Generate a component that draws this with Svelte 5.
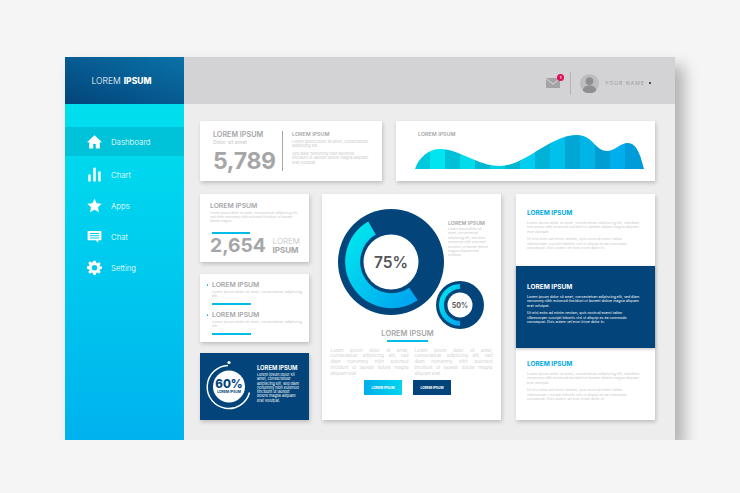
<script>
  const nav = [
    { label: 'Dashboard', icon: 'home', active: true },
    { label: 'Chart', icon: 'chart' },
    { label: 'Apps', icon: 'star' },
    { label: 'Chat', icon: 'chat' },
    { label: 'Setting', icon: 'gear' }
  ]
  const stripes = ['#00c9dd', '#00e6f0', '#00c0d8', '#00dcea', '#00b8d2', '#00cfe6', '#00b6d0', '#00cdef', '#00b2d6', '#00c0ec', '#00a6d4', '#00b4e6', '#009dd2', '#00aeee', '#009cda', '#0098d6']
  const short = 'Lorem ipsum dolor sit amet, consectetuer adipiscing elit, sed diam nonummy nibh euismod tincidunt ut laoreet dolore magna aliquam erat volutpat.'
  const long = 'Ut wisi enim ad minim veniam, quis nostrud exerci tation ullamcorper suscipit lobortis nisl ut aliquip ex ea commodo consequat. Duis autem vel eum iriure dolor in.'
  const column = 'Lorem ipsum dolor sit amet, consectetuer adipiscing elit, sed diam nonummy nibh euismod tincidunt ut laoreet dolore magna aliquam erat'
</script>

<div class="shell">
  <aside class="sidebar">
    <div class="brand">LOREM <b>IPSUM</b></div>
    <nav>
      {#each nav as item}
        <div class="item" class:active={item.active}>
          <svg viewBox="0 0 24 24" class="icon">
            {#if item.icon === 'home'}
              <path d="M12 2 0 13h3.500v10H10v-7h4v7h6.500V13H24z" />
            {:else if item.icon === 'chart'}
              <path d="M2 12h4v11H2zM10 1h4v22h-4zM18 7h4v16h-4z" />
            {:else if item.icon === 'star'}
              <path d="m12 1 3.400 7.400 8.100.9-6 5.500 1.700 8L12 18.700 4.800 22.800l1.700-8-6-5.500 8.100-.9z" />
            {:else if item.icon === 'chat'}
              <path fill-rule="evenodd" d="M1 3h22v15h-5v4l-4-4H1zM4.500 6.500v1.500h15V6.500zM4.500 10v1.500h15V10zM4.500 13.500V15h15v-1.500z" />
            {:else}
              <path fill-rule="evenodd" d="M10 1h4l.6 3.200 1.900.8 2.700-1.900 2.800 2.800-1.900 2.700.8 1.900L24 10v4l-3.100.6-.8 1.900 1.900 2.700-2.800 2.800-2.700-1.900-1.900.8L14 24h-4l-.6-3.100-1.900-.8-2.700 1.900-2.800-2.800 1.900-2.700-.8-1.900L0 14v-4l3.100-.5.8-1.900L2 4.900l2.800-2.800 2.700 1.900 1.900-.8zM12 8a4.300 4.300 0 1 0 0 8.600A4.300 4.300 0 0 0 12 8z" />
            {/if}
          </svg>
          <span>{item.label}</span>
        </div>
      {/each}
    </nav>
  </aside>

  <div class="main">
    <header>
      <div class="mail">
        <svg viewBox="0 0 14 10" width="14" height="10">
          <path d="M0 0h14L7 5.500z" fill="#a3a3a5" />
          <path d="M0 1.200 7 6.800l7-5.600V10H0z" fill="#a3a3a5" />
        </svg>
        <i class="badge">1</i>
      </div>
      <div class="sep"></div>
      <div class="avatar">
        <svg viewBox="0 0 20 20" width="19" height="19">
          <circle cx="10" cy="10" r="10" fill="#bdbdbf" />
          <circle cx="10" cy="7.500" r="4" fill="#8f8f91" />
          <path d="M3 17.500c0-4 3-5.500 7-5.500s7 1.500 7 5.500a10 10 0 0 1-14 0z" fill="#8f8f91" />
        </svg>
      </div>
      <span class="name">YOUR NAME</span>
      <i class="dot"></i>
    </header>

    <div class="content">
      <div class="row top">
        <section class="card stat">
          <div class="stat-left">
            <h3>LOREM IPSUM</h3>
            <p class="sub">Dolor sit amet</p>
            <div class="big">5,789</div>
          </div>
          <div class="stat-right">
            <h4>LOREM IPSUM</h4>
            <p>Lorem ipsum dolor sit amet, consectetuer adipiscing elit.</p>
            <p>Sed diam nonummy nibh euismod tincidunt ut laoreet dolore magna aliquam erat volutpat.</p>
          </div>
        </section>
        <section class="card wave">
          <h4>LOREM IPSUM</h4>
          <svg viewBox="0 0 229 34" width="229" height="34">
            <defs>
              <clipPath id="hills">
                <path d="M0 34C4 22 14 14 25 14 45 14 62 31 85 31 110 31 135 0 162 0 178 0 180 16 192 16 200 16 205 8 213 8 222 8 226 22 229 34Z" />
              </clipPath>
            </defs>
            <g clip-path="url(#hills)">
              {#each stripes as colour, i}
                <rect x={i * 15} y="0" width="15.500" height="34" fill={colour} />
              {/each}
            </g>
          </svg>
        </section>
      </div>

      <div class="row bottom">
        <div class="left">
          <section class="card count">
            <h3>LOREM IPSUM</h3>
            <p>Lorem ipsum dolor sit amet, consectetuer adipiscing elit, sed diam nonummy nibh euismod tincidunt ut laoreet dolore magna</p>
            <div class="rule"></div>
            <div class="count-row">
              <div class="big">2,654</div>
              <div class="word">LOREM<b>IPSUM</b></div>
            </div>
          </section>

          <section class="card list">
            {#each [0, 1] as n}
              <div class="list-item">
                <h3>LOREM IPSUM</h3>
                <p>Lorem ipsum dolor sit amet, consectetuer adipiscing elit.</p>
                <div class="rule"></div>
              </div>
            {/each}
          </section>

          <section class="card dark-card">
            <svg viewBox="0 0 50 52" width="50" height="52" class="ring">
              <circle cx="24" cy="3.500" r="1.600" fill="#fff" />
              <path d="M23 6.500a21.500 21.500 0 1 0 21.500 27" fill="none" stroke="#fff" stroke-width="1.500" />
              <circle cx="24" cy="27.500" r="16" fill="#fff" />
              <text x="24" y="29" text-anchor="middle" class="pct">60%</text>
              <text x="24" y="33.500" text-anchor="middle" class="pct-sub">LOREM IPSUM</text>
            </svg>
            <div class="dark-text">
              <h4>LOREM IPSUM</h4>
              <p>Lorem ipsum dolor sit amet, consectetuer adipiscing elit, sed diam nonummy nibh euismod tincidunt ut laoreet dolore magna aliquam erat volutpat.</p>
            </div>
          </section>
        </div>

        <section class="card center">
          <div class="donuts">
            <svg viewBox="0 0 106 106" width="106" height="106">
              <defs>
                <linearGradient id="arc" x1="0" y1="0" x2="1" y2="1">
                  <stop offset="0" stop-color="#00e6ee" />
                  <stop offset="1" stop-color="#00a5f0" />
                </linearGradient>
              </defs>
              <circle cx="53" cy="53" r="53" fill="#03457a" />
              <path d="M34 19A39 39 0 1 0 75.500 85" fill="none" stroke="url(#arc)" stroke-width="15" />
              <circle cx="53" cy="53" r="27.500" fill="#fff" />
              <text x="53" y="58.500" text-anchor="middle" class="pct-big">75%</text>
            </svg>
            <div class="side">
              <h4>LOREM IPSUM</h4>
              <p>Lorem ipsum dolor sit amet, consectetuer adipiscing elit, sed diam nonummy nibh euismod tincidunt ut laoreet dolore magna aliquam erat volutpat.</p>
            </div>
            <svg viewBox="0 0 48 48" width="48" height="48" class="small-donut">
              <circle cx="24" cy="24" r="24" fill="#03457a" />
              <path d="M24 5.500a18.500 18.500 0 0 0 0 37" fill="none" stroke="url(#arc)" stroke-width="5" />
              <circle cx="24" cy="24" r="12.500" fill="#fff" />
              <text x="24" y="26.500" text-anchor="middle" class="pct-small">50%</text>
            </svg>
          </div>
          <h2>LOREM IPSUM</h2>
          <div class="rule"></div>
          <div class="cols">
            <p>{column}</p>
            <p>{column}</p>
          </div>
          <div class="buttons">
            <button class="cyan">LOREM IPSUM</button>
            <button class="navy">LOREM IPSUM</button>
          </div>
        </section>

        <section class="card right">
          <div class="block">
            <h4>LOREM IPSUM</h4>
            <p>{short}</p>
            <p>{long}</p>
          </div>
          <div class="block navy-block">
            <h4>LOREM IPSUM</h4>
            <p>{short}</p>
            <p>{long}</p>
          </div>
          <div class="block last">
            <h4>LOREM IPSUM</h4>
            <p>{short}</p>
            <p>{long}</p>
          </div>
        </section>
      </div>
    </div>
  </div>
</div>

<style>
  :global(body) { background: #f5f5f5; font-family: Inter, "Liberation Sans", sans-serif; }
  h2, h3, h4, p { margin: 0; }

  .shell {
    width: 610px; height: 383px;
    margin: 57px 0 0 65px;
    display: flex;
    background: #ededed;
    box-shadow: 9px 9px 14px rgba(0,0,0,0.28);
  }

  /* Sidebar */
  .sidebar {
    width: 119px; flex-shrink: 0;
    background: linear-gradient(180deg, #00e6ee 0%, #00b2ee 100%);
    color: #fff;
  }
  .brand {
    height: 47px;
    display: flex; align-items: center; justify-content: center; gap: 3px;
    padding-right: 6px; box-sizing: border-box;
    background: linear-gradient(200deg, #0a72a8, #02447a);
    font-size: 8.500px; font-weight: 300;
  }
  .brand b { font-weight: 800; }
  nav { padding-top: 23px; }
  .item {
    height: 31px;
    padding-left: 22px;
    display: flex; align-items: center; gap: 9px;
    font-size: 7.800px; font-weight: 300;
  }
  .item.active { height: 29px; background: #00c3d9; margin-bottom: 3px; }
  .icon { width: 15px; height: 15px; fill: #fff; }

  /* Header */
  .main { flex: 1; display: flex; flex-direction: column; min-width: 0; }
  header {
    height: 47px;
    background: #d3d3d5;
    display: flex; align-items: center;
    padding-left: 362px;
    padding-top: 5px;
    box-sizing: border-box;
  }
  .mail { position: relative; width: 14px; height: 10px; line-height: 0; }
  .badge {
    position: absolute; top: -4px; right: -4px;
    width: 7px; height: 7px; border-radius: 50%;
    background: #dd0e5c; color: #fff;
    font: 700 4px/7px Inter, sans-serif; text-align: center;
  }
  .sep { width: 1px; height: 23px; background: #b9b3b5; margin: 0 9px 0 10px; }
  .avatar { line-height: 0; }
  .name { margin-left: 6px; font-size: 5.200px; letter-spacing: 0.950px; color: #9d9d9f; white-space: nowrap; }
  .dot { width: 2.500px; height: 2.500px; border-radius: 50%; background: #222; margin-left: 4px; flex-shrink: 0; }

  /* Content */
  .content { padding: 17px 20px 0 16px; display: flex; flex-direction: column; gap: 13px; }
  .row { display: flex; }
  .top { gap: 14px; }
  .bottom { gap: 13px; height: 226px; }
  .card { background: #fff; box-shadow: 1px 2px 4px rgba(0,0,0,0.2); box-sizing: border-box; color: #a6a6a8; }
  .big { font-weight: 700; color: #a6a6a8; line-height: 1; }
  .rule { background: #00bce6; }

  .stat { width: 182px; height: 60px; display: flex; padding: 10px 8px 0 13px; }
  .stat h3 { font-size: 7.200px; font-weight: 600; line-height: 8px; }
  .stat .sub { font-size: 5.200px; color: #c6c6c8; line-height: 6px; }
  .stat .big { font-size: 23px; margin-top: 5px; letter-spacing: -0.300px; }
  .stat-left { width: 69px; flex-shrink: 0; }
  .stat-right { border-left: 1.500px solid #a6a6a8; height: 40px; padding: 0 3px 0 9px; }
  .stat-right h4 { font-size: 5.400px; font-weight: 600; line-height: 7px; margin-bottom: 2px; }
  .stat-right p { font-size: 3.900px; line-height: 4.300px; color: #c8c8ca; margin-bottom: 3.500px; }

  .wave { width: 259px; height: 60px; padding: 10px 0 0 19px; }
  .wave h4 { font-size: 5.400px; font-weight: 600; line-height: 7px; margin: 0 0 -3px 3px; }
  .wave svg { display: block; margin-top: 0; }

  .left { width: 109px; display: flex; flex-direction: column; justify-content: space-between; }
  .count { height: 68px; padding: 8px 8px 0 10px; }
  .count h3 { font-size: 6.800px; font-weight: 600; line-height: 8px; margin-bottom: 1px; }
  .count p { font-size: 3.300px; line-height: 4px; color: #c8c8ca; margin-right: 3px; }
  .count .rule { width: 38px; margin: 9px 0 0 2px; height: 2px; }
  .count-row { display: flex; align-items: center; justify-content: space-between; margin-top: 2px; }
  .count .big { font-size: 19.300px; }
  .word { font-size: 8px; line-height: 9px; font-weight: 300; color: #bdbdbf; margin-right: 1px; }
  .word b { display: block; font-weight: 700; color: #a6a6a8; }

  .list { height: 68px; padding: 7px 7px 0 12px; }
  .list-item { height: 30px; position: relative; }
  .list-item::before {
    content: ''; position: absolute; left: -5.500px; top: 3.500px;
    width: 1.500px; height: 1.500px; border-radius: 50%; background: #00b4d8;
  }
  .list h3 { font-size: 6.800px; font-weight: 600; line-height: 8px; margin-bottom: 1px; }
  .list p { font-size: 3.600px; line-height: 4px; color: #c8c8ca; text-align: justify; }
  .list .rule { width: 39px; height: 1.500px; margin-top: 5.500px; }

  .dark-card { height: 67px; background: #03457a; display: flex; padding: 8px 9px 0 5px; gap: 2px; }
  .ring { flex-shrink: 0; margin-top: -2px; }
  .pct { font-size: 11.500px; font-weight: 800; fill: #03457a; }
  .pct-sub { font-size: 3.400px; font-weight: 700; fill: #03457a; }
  .dark-text { color: #fff; padding-top: 3px; }
  .dark-text h4 { font-size: 5.800px; font-weight: 700; line-height: 7px; margin-bottom: 2px; white-space: nowrap; }
  .dark-text p { font-size: 3.700px; line-height: 4.300px; }

  .center { width: 179px; padding-top: 15px; display: flex; flex-direction: column; align-items: center; }
  .donuts { position: relative; width: 147px; height: 120px; display: flex; gap: 4px; flex-shrink: 0; }
  .donuts > svg:first-child { flex-shrink: 0; }
  .pct-big { font-size: 15.500px; font-weight: 600; fill: #555557; }
  .pct-small { font-size: 7px; font-weight: 700; fill: #555557; }
  .small-donut { position: absolute; left: 98px; top: 72px; }
  .side { padding-top: 11px; width: 40px; flex-shrink: 0; }
  .side h4 { font-size: 5.300px; font-weight: 600; line-height: 7px; white-space: nowrap; }
  .side p { font-size: 3.300px; line-height: 4.400px; color: #c8c8ca; }
  .center h2 { font-size: 7.500px; font-weight: 600; line-height: 10px; color: #a6a6a8; margin: 0 8px 0 0; }
  .center .rule { width: 41px; height: 1.500px; margin: 1px 8px 6px 0; }
  .cols { display: flex; gap: 6px; width: 162px; }
  .cols p { width: 78px; font-size: 4.500px; line-height: 5.800px; color: #c4c4c6; text-align: justify; font-weight: 300; }
  .buttons { display: flex; gap: 11px; margin: 4px 8px 0 0; }
  .buttons button {
    width: 38px; height: 15px; border: none; padding: 0;
    color: #fff; font: 700 3.300px Inter, sans-serif;
  }
  .cyan { background: linear-gradient(90deg, #00aeea, #00d6ee); }
  .navy { background: #03457a; }

  .right { width: 139px; margin-left: 2px; display: flex; flex-direction: column; }
  .block { flex: 0 0 72px; box-sizing: border-box; padding: 15px 15px 0 11px; color: #c8c8ca; }
  .block.last { padding-top: 12px; }
  .block h4 { font-size: 6.500px; font-weight: 700; line-height: 8px; color: #00a8e0; margin-bottom: 4px; }
  .block p { font-size: 3.600px; line-height: 4.300px; margin-bottom: 3.500px; }
  .navy-block { flex: 0 0 82px; padding-top: 17px; background: #03457a; color: #fff; box-shadow: 0 1px 3px rgba(0,0,0,0.25); }
  .navy-block h4 { color: #fff; }
</style>
